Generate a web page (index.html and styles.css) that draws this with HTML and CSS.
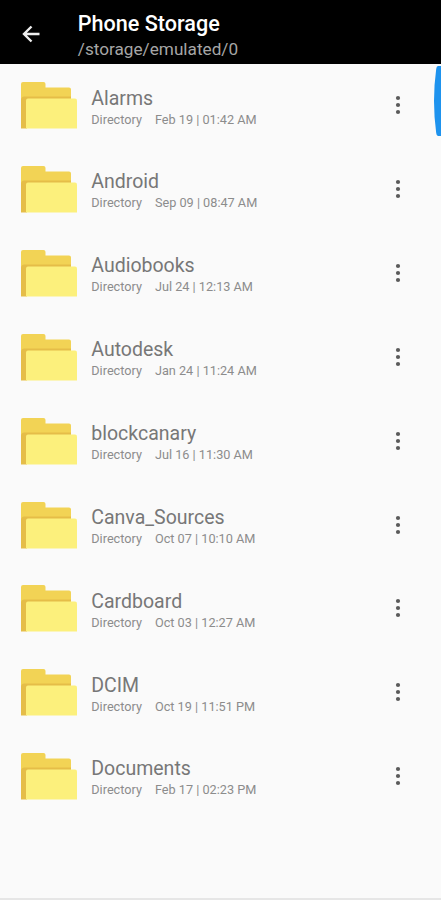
FILE: index.html
```
<!DOCTYPE html>
<html lang="en">
<head>
  <meta charset="utf-8">
  <title>Phone Storage</title>
  <link rel="stylesheet" href="styles.css">
</head>
<body>
  <!-- shared icons -->
  <svg class="sprite">
    <symbol id="folder" viewBox="0 0 56 47">
      <path fill="#f2d355" d="M0 46V2Q0 0 2 0H22.500Q24.500 0 24.500 2V5.500H48Q50 5.500 50 7.500V20H6V46Z"/>
      <path fill="#e5bd48" d="M0 46.500V18Q0 14.500 3.500 14.500H50V20H6V46.500Z"/>
      <path fill="#fcf07c" d="M5 46.500V18.500Q5 16.500 7 16.500H54Q56 16.500 56 18.500V46.500Z"/>
    </symbol>
    <symbol id="dots" viewBox="0 0 6 20">
      <circle cx="3" cy="3" r="2.100"/>
      <circle cx="3" cy="10" r="2.100"/>
      <circle cx="3" cy="17" r="2.100"/>
    </symbol>
  </svg>

  <header class="toolbar">
    <svg class="back" viewBox="0 0 18 18">
      <path d="M17.500 9H2M9.500 1.500L2 9l7.500 7.500"/>
    </svg>
    <div>
      <h1>Phone Storage</h1>
      <p class="path">/storage/emulated/0</p>
    </div>
  </header>

  <ul class="files">
    <li class="file">
      <svg class="folder"><use href="#folder"/></svg>
      <div class="info">
        <div class="name">Alarms</div>
        <div class="meta"><span>Directory</span><span>Feb 19 | 01:42 AM</span></div>
      </div>
      <svg class="more"><use href="#dots"/></svg>
    </li>
    <li class="file">
      <svg class="folder"><use href="#folder"/></svg>
      <div class="info">
        <div class="name">Android</div>
        <div class="meta"><span>Directory</span><span>Sep 09 | 08:47 AM</span></div>
      </div>
      <svg class="more"><use href="#dots"/></svg>
    </li>
    <li class="file">
      <svg class="folder"><use href="#folder"/></svg>
      <div class="info">
        <div class="name">Audiobooks</div>
        <div class="meta"><span>Directory</span><span>Jul 24 | 12:13 AM</span></div>
      </div>
      <svg class="more"><use href="#dots"/></svg>
    </li>
    <li class="file">
      <svg class="folder"><use href="#folder"/></svg>
      <div class="info">
        <div class="name">Autodesk</div>
        <div class="meta"><span>Directory</span><span>Jan 24 | 11:24 AM</span></div>
      </div>
      <svg class="more"><use href="#dots"/></svg>
    </li>
    <li class="file">
      <svg class="folder"><use href="#folder"/></svg>
      <div class="info">
        <div class="name">blockcanary</div>
        <div class="meta"><span>Directory</span><span>Jul 16 | 11:30 AM</span></div>
      </div>
      <svg class="more"><use href="#dots"/></svg>
    </li>
    <li class="file">
      <svg class="folder"><use href="#folder"/></svg>
      <div class="info">
        <div class="name">Canva_Sources</div>
        <div class="meta"><span>Directory</span><span>Oct 07 | 10:10 AM</span></div>
      </div>
      <svg class="more"><use href="#dots"/></svg>
    </li>
    <li class="file">
      <svg class="folder"><use href="#folder"/></svg>
      <div class="info">
        <div class="name">Cardboard</div>
        <div class="meta"><span>Directory</span><span>Oct 03 | 12:27 AM</span></div>
      </div>
      <svg class="more"><use href="#dots"/></svg>
    </li>
    <li class="file">
      <svg class="folder"><use href="#folder"/></svg>
      <div class="info">
        <div class="name">DCIM</div>
        <div class="meta"><span>Directory</span><span>Oct 19 | 11:51 PM</span></div>
      </div>
      <svg class="more"><use href="#dots"/></svg>
    </li>
    <li class="file">
      <svg class="folder"><use href="#folder"/></svg>
      <div class="info">
        <div class="name">Documents</div>
        <div class="meta"><span>Directory</span><span>Feb 17 | 02:23 PM</span></div>
      </div>
      <svg class="more"><use href="#dots"/></svg>
    </li>
  </ul>

  <!-- fast scroll handle -->
  <svg class="scroller" viewBox="0 0 8 70">
    <path fill="#1e93ee" d="M8 0H5Q3.500 0 3.200 3Q-1.200 35 3.200 67Q3.500 70 5 70H8Z"/>
  </svg>
</body>
</html>
```

FILE: styles.css
```
* {
  box-sizing: border-box;
}

body {
  margin: 0;
  height: 900px;
  position: relative;
  overflow: hidden;
  font-family: Roboto, sans-serif;
  background-color: #fafafa;
  border-bottom: 2px solid #e6e6e6;
}

.sprite {
  display: none;
}

.toolbar {
  display: flex;
  align-items: flex-start;
  height: 64px;
  padding: 11px 0 0 21.5px;
  background-color: #000;
  color: #fff;
}

.back {
  width: 18px;
  height: 18px;
  margin: 14px 38.3px 0 0;
  fill: none;
  stroke: #eee;
  stroke-width: 2.4;
}

h1 {
  margin: 0;
  font-size: 21.6px;
  font-weight: 500;
  line-height: 26px;
}

.path {
  margin: 1px 0 0;
  font-size: 17.2px;
  line-height: 22px;
  color: #a6a6a6;
}

.files {
  margin: 0;
  padding: 0;
  list-style: none;
}

.file {
  display: flex;
  align-items: center;
  height: 83.85px;
  padding: 0 40px 0 21.3px;
}

.folder {
  width: 56px;
  height: 47px;
}

.info {
  flex: 1;
  margin-left: 14px;
  padding-top: 3.4px;
}

.name {
  font-size: 19.5px;
  line-height: 24px;
  color: #777;
}

.meta {
  display: flex;
  gap: 13px;
  font-size: 12.7px;
  line-height: 18px;
  color: #8c8c8c;
}

.more {
  width: 6px;
  height: 20px;
  margin-bottom: 1px;
  fill: #5a5a5a;
}

.scroller {
  position: absolute;
  top: 66px;
  right: 0;
  width: 8px;
  height: 70px;
}
```
